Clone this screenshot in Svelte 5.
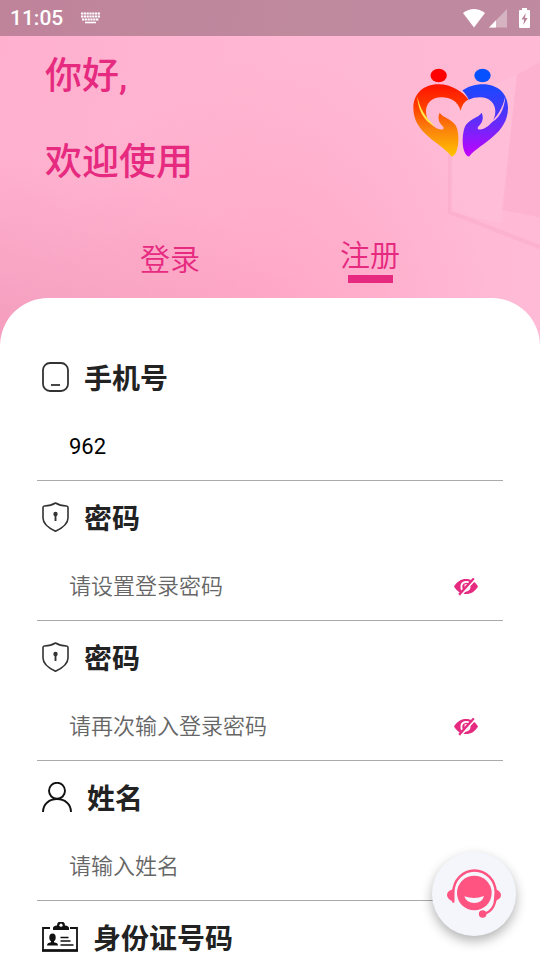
<script>
  let phone = $state('962');
  let password = $state('');
  let confirmPassword = $state('');
  let name = $state('');
  let idNumber = $state('');

  let tab = $state('register');
  let showPassword = $state(false);
  let showConfirm = $state(false);
</script>

<!-- shared svg icons -->
{#snippet shield()}
  <svg class="icon" width="27" height="30" viewBox="0 0 27 30" fill="none" stroke="#333" stroke-width="1.6" stroke-linejoin="round">
    <path d="M13.5 1C10 3.2 6 3.8 2.5 4 1.6 4.1 1 4.7 1 5.6V16c0 6.500 5.500 10 12.500 13.200C20.500 26 26 22.500 26 16V5.600c0-.9-.6-1.500-1.500-1.600C21 3.800 17 3.200 13.500 1z" />
    <circle cx="13.500" cy="12" r="2.200" fill="#333" stroke="none" />
    <path d="M13.500 12v7" stroke-width="1.900" />
  </svg>
{/snippet}

{#snippet eye()}
  <svg width="24" height="18" viewBox="0 0 24 18">
    <path d="M0 8.500C3 3.500 7 1 12 1S21 3.500 24 8.500c-3 5-7 7.500-12 7.500S3 13.500 0 8.500z" fill="#e62a80" />
    <path d="M9 13C6 9.500 7 4.500 11.500 4c2-.2 3 .2 3.800 1M15.800 8.500c-.3 2.800-2 4.300-4.600 4.400" fill="none" stroke="#fff" stroke-width="1.800" />
    <path d="M11.200 9.300V6.900h2.300" fill="none" stroke="#fff" stroke-width="1.200" />
    <path d="M5.200 16.800L20 .5" stroke="#e62a80" stroke-width="2.600" />
    <path d="M7 17.600L21.800 1" stroke="#fff" stroke-width="1.500" />
  </svg>
{/snippet}

<div class="page">
  <!-- top of the page -->
  <header class="hero">
    <svg class="backdrop" viewBox="0 0 540 345" preserveAspectRatio="none" aria-hidden="true">
      <path d="M517 72L450 100V205L502 216z" fill="#fff" opacity=".06" />
      <path d="M517 72L502 203 540 210V60z" fill="#f08fb4" opacity=".14" />
      <path d="M450 140V205L540 239" fill="none" stroke="#f08fb4" stroke-width="4" opacity=".18" />
    </svg>

    <div class="statusbar">
      <span class="time">11:05</span>
      <svg width="19" height="12" viewBox="0 0 19 12" aria-hidden="true">
        <path d="M0 1.500h19M0 4.500h19M1 7.500h17" stroke="#fff" stroke-width="2" stroke-dasharray="2.200 .6" />
        <path d="M4 10.500h11" stroke="#fff" stroke-width="1.600" />
      </svg>
      <div class="signals">
        <svg width="22" height="19" viewBox="0 0 22 19" aria-hidden="true">
          <path d="M0 4Q11-4 22 4L11 18.500z" fill="#fff" />
        </svg>
        <svg width="18" height="19" viewBox="0 0 18 19" aria-hidden="true">
          <path d="M18 0v18.500H0z" fill="#fff" opacity=".35" />
          <path d="M7 11.300v7.200H0z" fill="#fff" />
        </svg>
        <svg class="battery" width="11" height="20" viewBox="0 0 11 20" aria-hidden="true">
          <path d="M3 0h5v2h2q1 0 1 1v16q0 1-1 1H1q-1 0-1-1V3q0-1 1-1h2z" fill="#fff" />
          <path d="M6.800 5L2.500 11.500h2.600L4.300 17 8.600 10H6z" fill="#b9849a" />
        </svg>
      </div>
    </div>

    <div class="intro">
      <h1>
        <span>你好,</span>
        <span>欢迎使用</span>
      </h1>
      <svg class="logo" width="95" height="89" viewBox="39 203 285 266" role="img" aria-label="logo">
        <defs>
          <linearGradient id="warm" x1="0" y1="0" x2="0" y2="1">
            <stop offset="0" stop-color="#ff1200" />
            <stop offset=".3" stop-color="#ff3b00" />
            <stop offset=".6" stop-color="#fb7d0c" />
            <stop offset="1" stop-color="#ffc400" />
          </linearGradient>
          <linearGradient id="cool" x1="0" y1="0" x2="0" y2="1">
            <stop offset="0" stop-color="#1849ff" />
            <stop offset=".35" stop-color="#4338fa" />
            <stop offset=".65" stop-color="#7a22fb" />
            <stop offset="1" stop-color="#c400ff" />
          </linearGradient>
        </defs>
        <ellipse cx="116" cy="225" rx="24.500" ry="20.500" fill="#f00" />
        <ellipse cx="247.500" cy="225" rx="24.500" ry="20.500" fill="#0651ff" />
        <path d="M155 468C120 424 40 400 40 322C40 280 70 251 115 251C156 251 190 275 205 297C192 304 185 315 182 331C174 302 152 290 124 290C96 290 78 308 78 332C78 360 98 382 122 387C132 389 134 382 126 375C115 365 113 350 119 337C128 353 162 356 171 383C179 412 174 438 170 450C166 462 160 468 155 468z" fill="url(#warm)" />
        <path d="M207 468C244 426 324 400 324 322C324 280 294 251 249 251C224 251 203 258 187 270C195 278 203 288 206 298C216 292 228 290 240 290C268 290 286 308 286 332C286 360 266 382 242 387C232 389 230 382 238 375C249 365 251 350 245 337C236 353 202 356 193 383C185 412 188 438 192 450C196 462 202 468 207 468z" fill="url(#cool)" />
        <path d="M52 287C53 325 70 362 106 378C76 352 59 322 52 287z" fill="#ffe84a" />
        <path d="M316 287C314 325 298 358 262 372C292 352 308 322 316 287z" fill="#ffb8e0" />
      </svg>
    </div>

    <nav class="tabs">
      <button type="button" class:active={tab === 'login'} onclick={() => (tab = 'login')}>登录</button>
      <button type="button" class:active={tab === 'register'} onclick={() => (tab = 'register')}>注册</button>
    </nav>
  </header>

  <!-- register form -->
  <form class="card">
    <div class="field">
      <label for="phone">
        <svg class="icon" width="27" height="30" viewBox="0 0 27 30" fill="none" stroke="#333" stroke-width="1.800">
          <rect x="1" y="1" width="25" height="28" rx="7" />
          <path d="M9 23h9" />
        </svg>
        手机号
      </label>
      <div class="row">
        <input id="phone" type="text" inputmode="numeric" bind:value={phone} />
      </div>
    </div>

    <div class="field">
      <label for="password">{@render shield()}密码</label>
      <div class="row">
        <input id="password" type={showPassword ? 'text' : 'password'} placeholder="请设置登录密码" bind:value={password} />
        <button type="button" class="eye" aria-label="显示密码" onclick={() => (showPassword = !showPassword)}>{@render eye()}</button>
      </div>
    </div>

    <div class="field">
      <label for="confirm">{@render shield()}密码</label>
      <div class="row">
        <input id="confirm" type={showConfirm ? 'text' : 'password'} placeholder="请再次输入登录密码" bind:value={confirmPassword} />
        <button type="button" class="eye" aria-label="显示密码" onclick={() => (showConfirm = !showConfirm)}>{@render eye()}</button>
      </div>
    </div>

    <div class="field">
      <label for="name">
        <svg class="icon" width="30" height="30" viewBox="0 0 30 30" fill="none" stroke="#111" stroke-width="1.900">
          <circle cx="15" cy="8.800" r="8" />
          <path d="M1 30C1 22 7.500 17 15 17s14 5 14 13" />
        </svg>
        姓名
      </label>
      <div class="row">
        <input id="name" type="text" placeholder="请输入姓名" bind:value={name} />
      </div>
    </div>

    <div class="field">
      <label for="idnumber">
        <svg class="icon" width="36" height="30" viewBox="0 0 36 30">
          <path d="M8 6H1v22.500h34V6h-7" fill="none" stroke="#111" stroke-width="1.800" />
          <path d="M0 28.500h36" stroke="#111" stroke-width="2.600" />
          <path d="M11 8V6q0-2 4-2.500a4 4 0 0 1 8 0Q27 4 27 6v2z" fill="#111" />
          <circle cx="19" cy="3.200" r="1.600" fill="#fff" />
          <ellipse cx="10.500" cy="15.500" rx="3.200" ry="4" fill="#111" />
          <path d="M9 18h3v2.200q4 .6 4 3.300H5q0-2.700 4-3.300z" fill="#111" />
          <path d="M18.500 15.500h8M18.500 19h10M18.500 23h13" stroke="#111" stroke-width="1.500" />
        </svg>
        身份证号码
      </label>
      <div class="row">
        <input id="idnumber" type="text" bind:value={idNumber} />
      </div>
    </div>
  </form>

  <!-- customer service -->
  <button type="button" class="service" aria-label="客服">
    <svg width="54" height="50" viewBox="81 88 162 150">
      <circle cx="163" cy="160" r="52" fill="#ff5382" />
      <path d="M133 170q30 11 59-1q-5 21-29 21q-24 0-30-20z" fill="#f4f6fc" />
      <path d="M100 186V158a63 65 0 0 1 127 0q3 53-35 65" fill="none" stroke="#ff5382" stroke-width="7" stroke-linecap="round" />
      <path d="M101 148v38q-19-6-20-19t20-19zM226 148q17 7 17 19t-22 19z" fill="#ff5382" />
      <ellipse cx="188" cy="223" rx="11.500" ry="11" fill="#ff5382" />
    </svg>
  </button>
</div>

<style>
  :global(body) {
    margin: 0;
    background: #fff;
  }

  .page {
    height: 100vh;
    overflow-y: auto;
    scrollbar-width: none;
    font-family: Roboto, "Noto Sans CJK SC", sans-serif;
    background: #fff;
  }

  .hero {
    position: relative;
    padding-bottom: 59px;
    background:
      radial-gradient(ellipse at 0% 100%, rgba(236, 140, 175, 0.6), rgba(250, 160, 192, 0) 40%),
      radial-gradient(ellipse at 50% 100%, rgba(255, 160, 192, 0.8), rgba(255, 160, 192, 0) 60%),
      linear-gradient(100deg, #ffb0ce, #ffb7d3 50%, #ffbad6);
  }

  .backdrop {
    position: absolute;
    top: 0;
    left: 0;
    width: 100%;
    height: 100%;
  }

  .statusbar {
    position: relative;
    display: flex;
    align-items: center;
    gap: 18px;
    height: 36px;
    padding: 0 10px;
    color: #fff;
    background: rgba(0, 0, 0, 0.25);
  }

  .time {
    font-size: 21px;
    font-weight: 500;
  }

  .signals {
    display: flex;
    align-items: center;
    gap: 4px;
    margin-left: auto;
  }

  .battery {
    margin-left: 8px;
  }

  .intro {
    position: relative;
    display: flex;
    justify-content: space-between;
    padding: 16px 32px 0 45px;
  }

  h1 {
    display: flex;
    flex-direction: column;
    gap: 36px;
    margin: 0;
    font-size: 37px;
    font-weight: 500;
    line-height: 50px;
    color: #e62a80;
  }

  .logo {
    margin-top: 16px;
  }

  .tabs {
    position: relative;
    display: grid;
    grid-template-columns: 1fr 1fr;
    align-items: center;
    padding: 48px 70px 15px;
  }

  .tabs button {
    padding: 0;
    border: 0;
    background: none;
    font-family: inherit;
    font-size: 30px;
    font-weight: 350;
    line-height: 40px;
    color: #e62a80;
  }

  .tabs .active::after {
    content: "";
    display: block;
    width: 45px;
    height: 8px;
    margin: -1px auto 0;
    background: #e62a80;
  }

  .card {
    position: relative;
    margin-top: -59px;
    padding: 43px 37px 0;
    border-radius: 48px 48px 0 0;
    background: #fff;
  }

  label {
    display: flex;
    align-items: center;
    gap: 15px;
    height: 72px;
    padding-left: 5px;
    font-size: 28px;
    font-weight: 700;
    color: #222;
  }

  .icon {
    flex: none;
  }

  .row {
    display: flex;
    align-items: center;
    height: 67px;
    padding: 0 25px 0 32px;
    border-bottom: 1px solid #aaa;
  }

  input {
    flex: 1;
    min-width: 0;
    padding: 0;
    border: 0;
    outline: 0;
    background: none;
    font-family: inherit;
    font-size: 22px;
    line-height: 34px;
    color: #000;
  }

  input::placeholder {
    font-weight: 350;
    color: #666;
  }

  .eye {
    display: flex;
    padding: 0;
    border: 0;
    background: none;
  }

  .service {
    position: fixed;
    right: 24px;
    bottom: 24px;
    display: flex;
    align-items: center;
    justify-content: center;
    width: 84px;
    height: 84px;
    padding: 0;
    border: 0;
    border-radius: 50%;
    background: #f4f6fc;
    box-shadow: 0 5px 12px rgba(0, 0, 0, 0.3);
  }
</style>
